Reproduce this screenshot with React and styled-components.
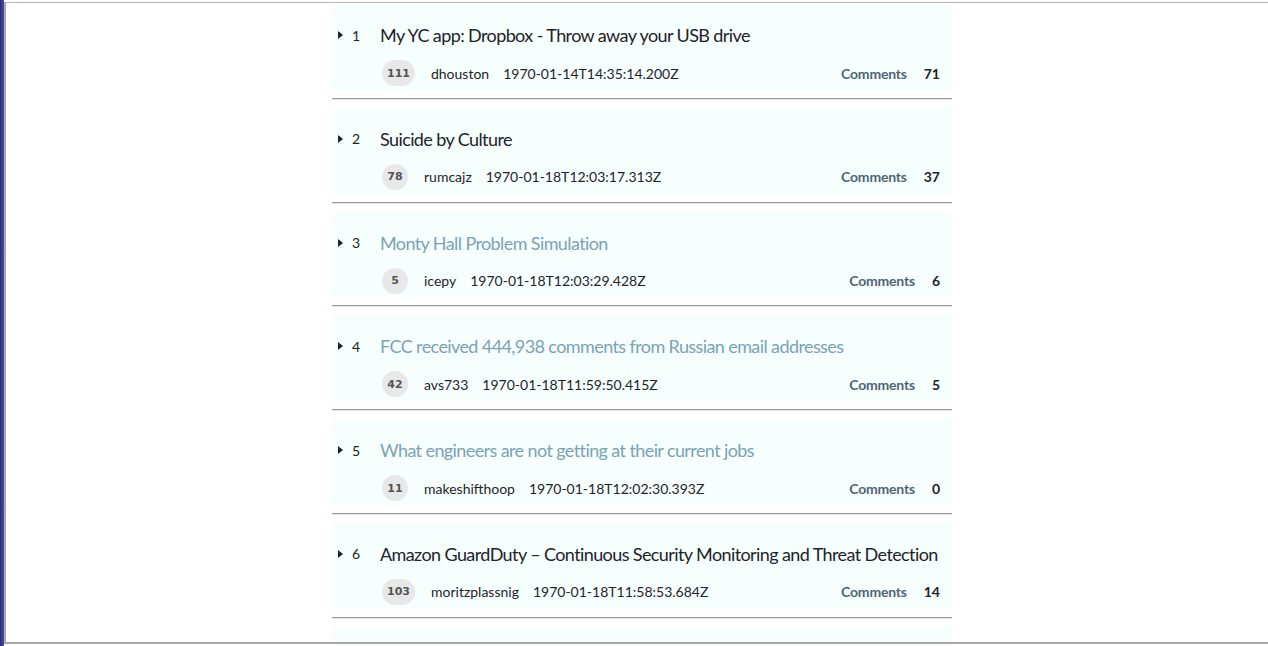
import React from "react";
import styled, { createGlobalStyle } from "styled-components";

const GlobalStyle = createGlobalStyle`
  html, body {
    margin: 0;
    padding: 0;
    background: #ffffff;
    overflow: hidden;
  }
  body {
    font-family: Lato, "Open Sans", sans-serif;
    color: #222;
  }
`;

const Screen = styled.div`
  height: 646px;
  display: flex;
`;

const DesktopEdge = styled.div`
  width: 4px;
  background: linear-gradient(to right, #2a2c6e, #4a4fa8);
`;

const Window = styled.div`
  flex: 1;
  margin-top: 2px;
  margin-bottom: 2px;
  border-top: 1px solid #b4b4b4;
  border-left: 2px solid #a8a8a8;
  border-bottom: 2px solid #a8a8a8;
  overflow: hidden;
  display: flex;
  padding-left: 326px;
`;

const List = styled.ul`
  width: 620px;
  margin: 0;
  padding: 0;
  list-style: none;
`;

const Item = styled.li`
  margin: 0;
`;

const Card = styled.div`
  background: #f7fefe;
  margin-top: 1px;
  padding: 20px 12px 0 6px;
  height: 65.8px;
`;

const TitleRow = styled.div`
  display: flex;
  align-items: center;
  height: 22px;
  white-space: nowrap;
`;

const Caret = styled.span`
  width: 0;
  height: 0;
  border-top: 4px solid transparent;
  border-bottom: 4px solid transparent;
  border-left: 5px solid #222;
  margin-right: 9px;
`;

const Rank = styled.span`
  font-size: 14px;
  width: 28px;
  color: #222;
`;

const Title = styled.a`
  font-size: 18px;
  letter-spacing: -0.6px;
  color: ${(p) => (p.$visited ? "#7aa3b3" : "#1f2328")};
  text-decoration: none;
`;

const MetaRow = styled.div`
  display: flex;
  align-items: center;
  margin-top: 14px;
  padding-left: 44px;
  height: 26px;
  font-size: 14px;
`;

const Score = styled.span`
  display: inline-flex;
  align-items: center;
  justify-content: center;
  min-width: 26px;
  height: 26px;
  padding: 0 5px;
  box-sizing: border-box;
  border-radius: 13px;
  background: #e8e8e8;
  color: #555;
  font-family: "DejaVu Sans", Verdana, sans-serif;
  font-size: 11px;
  font-weight: 700;
  margin-right: 16px;
`;

const Author = styled.span`
  color: #1f2328;
  margin-right: 14px;
`;

const Time = styled.span`
  color: #1f2328;
`;

const Comments = styled.a`
  margin-left: auto;
  color: #4d6672;
  font-size: 14px;
  font-weight: 700;
  letter-spacing: -0.2px;
  text-decoration: none;
`;

const Count = styled.span`
  font-weight: 700;
  color: #1f2328;
  margin-left: 17px;
`;

const Divider = styled.hr`
  margin: 8px 0;
  border: 0;
  border-top: 1px solid #9a9a9a;
  border-bottom: 1px solid #e6e6e6;
`;

const stories = [
  { id: 1, title: "My YC app: Dropbox - Throw away your USB drive", score: 111, by: "dhouston", time: "1970-01-14T14:35:14.200Z", comments: 71 },
  { id: 2, title: "Suicide by Culture", score: 78, by: "rumcajz", time: "1970-01-18T12:03:17.313Z", comments: 37 },
  { id: 3, title: "Monty Hall Problem Simulation", score: 5, by: "icepy", time: "1970-01-18T12:03:29.428Z", comments: 6, visited: true },
  { id: 4, title: "FCC received 444,938 comments from Russian email addresses", score: 42, by: "avs733", time: "1970-01-18T11:59:50.415Z", comments: 5, visited: true },
  { id: 5, title: "What engineers are not getting at their current jobs", score: 11, by: "makeshifthoop", time: "1970-01-18T12:02:30.393Z", comments: 0, visited: true },
  { id: 6, title: "Amazon GuardDuty \u2013 Continuous Security Monitoring and Threat Detection", score: 103, by: "moritzplassnig", time: "1970-01-18T11:58:53.684Z", comments: 14 },
  { id: 7, title: "", score: 0, by: "", time: "", comments: 0 },
];

const App = () => {
  return (
    <>
      <GlobalStyle />
      <Screen>
        <DesktopEdge />
        <Window>
          <List>
            {stories.map((s) => (
              <Item key={s.id}>
                <Card>
                  {s.title && (
                    <>
                      <TitleRow>
                        <Caret />
                        <Rank>{s.id}</Rank>
                        <Title href="#" $visited={s.visited}>{s.title}</Title>
                      </TitleRow>
                      <MetaRow>
                        <Score>{s.score}</Score>
                        <Author>{s.by}</Author>
                        <Time>{s.time}</Time>
                        <Comments href="#">Comments</Comments>
                        <Count>{s.comments}</Count>
                      </MetaRow>
                    </>
                  )}
                </Card>
                <Divider />
              </Item>
            ))}
          </List>
        </Window>
      </Screen>
    </>
  );
};

export default App;
